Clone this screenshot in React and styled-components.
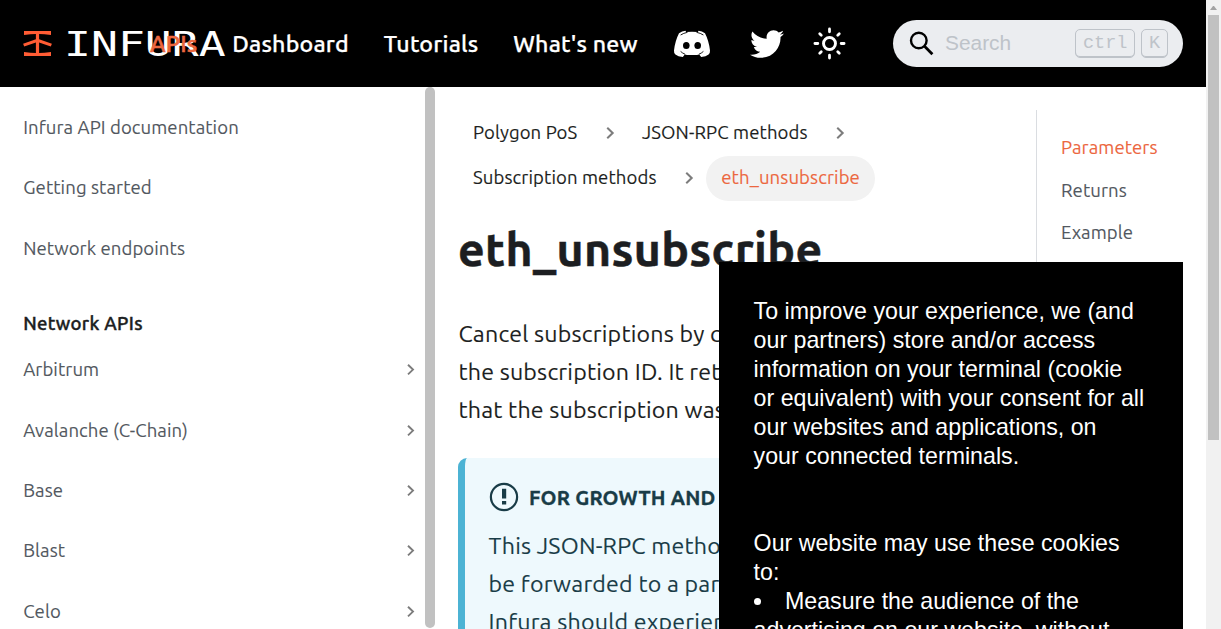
import React from "react";
import styled, { createGlobalStyle } from "styled-components";
import { FaTwitter } from "react-icons/fa";

const ubuntu = `Ubuntu, "Noto Sans", "Open Sans", sans-serif`;
const orange = "#ec673f";

const GlobalStyle = createGlobalStyle`
  *, *::before, *::after { box-sizing: border-box; }
  html, body { margin: 0; height: 100%; overflow: hidden; }
  body { background: #fff; color: #1c1e21; font: 400 23.2px/38px ${ubuntu}; }
`;

const Page = styled.div`
  display: flex;
  width: 100vw;
  height: 100vh;
  overflow: hidden;
`;

const Site = styled.div`
  position: relative;
  display: flex;
  flex-direction: column;
  width: 1206px;
  overflow: hidden;
`;

const Navbar = styled.header`
  flex: none;
  display: flex;
  align-items: center;
  height: 87px;
  padding: 0 23px;
  background: #000;
`;

const Brand = styled.a`
  flex: none;
  display: flex;
  align-items: center;
  width: 127px;
  color: #fff;
  & > svg { flex: none; }
`;

const Wordmark = styled.span`
  flex: none;
  margin-left: 11.5px;
  font: 400 34.4px/40px "DejaVu Sans Mono", monospace;
  white-space: nowrap;
  transform: scaleX(1.302);
  transform-origin: left center;
`;

const NavLink = styled.a`
  flex: none;
  position: relative;
  margin-right: 35px;
  padding-bottom: 2px;
  color: ${(p) => (p.$active ? orange : "#fff")};
  font-weight: 500;
  letter-spacing: 0.16px;
  white-space: nowrap;
  -webkit-text-stroke: ${(p) => (p.$active ? 0.5 : 0.25)}px;
`;

const NavIcon = styled.a`
  flex: none;
  display: flex;
  margin-right: ${(p) => p.$gap}px;
  color: #fff;
`;

const SearchBox = styled.div`
  display: flex;
  align-items: center;
  width: 290px;
  height: 47px;
  margin-left: auto;
  padding: 0 15px 0 16px;
  border-radius: 24px;
  background: #ebedf0;
  color: #bec3c9;
`;

const Placeholder = styled.span`
  flex: 1;
  margin-left: 11px;
  padding-bottom: 1px;
  font: 20.88px/24px "Liberation Sans", Arial, sans-serif;
`;

const Key = styled.kbd`
  height: 29px;
  margin-left: 6px;
  padding: 0 6.8px;
  border: 1px solid #bec3c9;
  border-radius: 5px;
  box-shadow: inset 0 -1px 0 #bec3c9;
  font: 18.56px/27px "Liberation Mono", monospace;
`;

const Body = styled.div`
  flex: 1;
  display: flex;
  min-height: 0;
`;

const Sidebar = styled.aside`
  flex: none;
  display: flex;
  width: 435px;
`;

const Menu = styled.nav`
  flex: 1;
  padding: 10.9px 8px 0 23.2px;
`;

const MenuItem = styled.a`
  display: flex;
  align-items: center;
  justify-content: space-between;
  height: 60.36px;
  color: #525860;
  font-size: 18.56px;
  letter-spacing: 0.08px;
  -webkit-text-stroke: 0.1px;
`;

const MenuHeading = styled.div`
  margin-top: 27px;
  height: 34px;
  color: #1c1e21;
  font-size: 18.56px;
  font-weight: 500;
  letter-spacing: 0.33px;
  line-height: 35px;
  -webkit-text-stroke: 0.4px;
`;

const SidebarScroll = styled.div`
  width: 10px;
  margin-bottom: 1px;
  border-radius: 5px;
  background: #c1c1c1;
`;

const Article = styled.main`
  flex: none;
  width: 578px;
  padding: 24px 0 0 23px;
  -webkit-text-stroke: 0.12px;
`;

const Crumbs = styled.nav`
  display: flex;
  flex-wrap: wrap;
  width: 560px;
`;

const Crumb = styled.span`
  display: flex;
  align-items: center;
  height: 45px;
  padding: 0 15px 2px;
  border-radius: 23px;
  background: ${(p) => (p.$active ? "#f2f2f2" : "none")};
  color: ${(p) => (p.$active ? orange : "#1c1e21")};
  font-size: 18.56px;
  letter-spacing: 0.1px;
`;

const CrumbArrow = styled.span`
  display: flex;
  align-items: center;
  margin: 0 10.2px 0 11.5px;
  padding-bottom: 1px;
`;

const Title = styled.h1`
  margin: 19px 0 0;
  font-size: 46.4px;
  font-weight: 700;
  letter-spacing: 0.36px;
  line-height: 58px;
  -webkit-text-stroke: 0.5px;
`;

const Lines = styled.p`
  margin: ${(p) => p.$margin};
  letter-spacing: 0.2px;
  white-space: pre;
`;

const Admonition = styled.section`
  height: 220px;
  margin-top: 30px;
  padding: 21px 23px;
  border-left: 7px solid #4cb3d4;
  border-radius: 9px;
  background: #eef9fd;
  color: #193c47;
`;

const AdmonitionTitle = styled.div`
  display: flex;
  align-items: center;
  gap: 10px;
  height: 38px;
  padding-left: 1px;
  font-size: 20.3px;
  font-weight: 700;
  letter-spacing: 0.2px;
  white-space: nowrap;
  -webkit-text-stroke: 0.3px;
  & > svg { margin-top: -2px; }
`;

const Toc = styled.nav`
  flex: none;
  align-self: flex-start;
  width: 170px;
  height: 480px;
  margin: 23px 0 0 23px;
  padding: 17px 24px;
  border-left: 1px solid #dadde1;
`;

const TocLink = styled.a`
  display: block;
  height: 42.6px;
  color: ${(p) => (p.$active ? orange : "#525860")};
  font-size: 18.56px;
  letter-spacing: 0.08px;
  line-height: 42.6px;
  -webkit-text-stroke: 0.1px;
`;

const Consent = styled.div`
  position: absolute;
  left: 719px;
  top: 262px;
  width: 464px;
  height: 367px;
  padding: 35px 34.6px 0;
  overflow: hidden;
  background: #000;
  color: #fff;
  font: 23.2px/29px "Liberation Sans", Arial, sans-serif;
`;

const ConsentText = styled.p`
  margin: 0 0 ${(p) => p.$after ?? 0}px;
  white-space: pre;
`;

const Bullet = styled.span`
  display: inline-block;
  width: 7px;
  height: 7px;
  margin-right: 24.4px;
  border-radius: 50%;
  background: #fff;
  vertical-align: 4px;
`;

const Scrollbar = styled.div`
  flex: none;
  width: 15px;
  padding: 0 2px;
  background: #f1f1f1;
`;

const ScrollUp = styled.div`
  height: 15px;
  padding: 6px 2px 0;
  &::before {
    content: "";
    display: block;
    border: 3.5px solid transparent;
    border-top: 0;
    border-bottom: 4px solid #a3a3a3;
  }
`;

const ScrollThumb = styled.div`
  width: 11px;
  height: 425px;
  background: #c1c1c1;
`;

const LogoMark = () => (
  <svg width="29" height="25" viewBox="0 0 29 25" fill="#ff5c34">
    <path d="M1 0H28V4Q21 2.9 16.1 2.9V8.2L28.9 12.8L27.8 15.6L16.1 11.4V22.1Q21 22.1 28 21V25H1V21Q8 22.1 12.9 22.1V11.4L1.2 15.6L.1 12.8L12.9 8.2V2.9Q8 2.9 1 4Z" />
  </svg>
);

const DiscordIcon = () => (
  <svg width="38" height="28" viewBox="0 0 38 28">
    <path
      fill="#fff"
      d="M12.5 .8Q9 1 6 3.2Q2 11 1 20.5Q.8 23.3 2.4 24.6Q5 26.8 9.8 26.9L11.8 24.5Q13 25 19 25Q25 25 26.2 24.5L28.2 26.9Q33 26.8 35.6 24.6Q37.2 23.3 37 20.5Q36 11 32 3.2Q29 1 25.5 .8L24.9 2Q19 1.3 13.1 2Z"
    />
    <path d="M7.6 5Q10.5 3.1 14.5 2.3M30.4 5Q27.5 3.1 23.5 2.3M7.6 21.4Q9.5 23.2 12.2 24.3M30.4 21.4Q28.5 23.2 25.8 24.3" fill="none" stroke="#000" strokeWidth=".9" />
    <ellipse cx="13.3" cy="15.5" rx="3.3" ry="3.6" />
    <ellipse cx="24.7" cy="15.5" rx="3.3" ry="3.6" />
  </svg>
);

const SunIcon = () => (
  <svg width="35" height="35" viewBox="0 0 24 24" fill="none" stroke="#fff" strokeLinecap="round" strokeWidth="1.9">
    <circle cx="12" cy="12" r="4.1" strokeWidth="2" />
    <path d="M12 2V4M12 20V22M2 12H4M20 12H22M5.3 5.3L6.35 6.35M17.65 17.65L18.7 18.7M5.3 18.7L6.35 17.65M17.65 6.35L18.7 5.3" />
  </svg>
);

const SearchIcon = () => (
  <svg width="25" height="25" viewBox="0 0 25 25" fill="none" stroke="#000">
    <circle cx="9.8" cy="9.5" r="7.8" strokeWidth="2.4" />
    <path d="M15.3 15L23.4 23.2" strokeWidth="2.8" />
  </svg>
);

const Chevron = ({ size }) => (
  <svg width={size} height={size} viewBox="0 0 12 12" fill="none" stroke="#7c7c7c" strokeWidth="1.9">
    <path d="M3 .8L8 5.6L3 10.4" />
  </svg>
);

const InfoIcon = () => (
  <svg width="30" height="30" viewBox="0 0 30 30" fill="#193c47">
    <circle cx="15" cy="15" r="13.1" fill="none" stroke="#193c47" strokeWidth="2.2" />
    <path d="M13 6.8H17.2V16.5H13ZM13 19H17.2V22.6H13Z" />
  </svg>
);

const topPages = ["Infura API documentation", "Getting started", "Network endpoints"];
const networks = ["Arbitrum", "Avalanche (C-Chain)", "Base", "Blast", "Celo"];
const crumbs = ["Polygon PoS", "JSON-RPC methods", "Subscription methods"];

export default function App() {
  return (
    <Page>
      <GlobalStyle />
      <Site>
        <Navbar>
          <Brand>
            <LogoMark />
            <Wordmark>INFURA</Wordmark>
          </Brand>
          <NavLink $active>APIs</NavLink>
          <NavLink>Dashboard</NavLink>
          <NavLink>Tutorials</NavLink>
          <NavLink>What's new</NavLink>
          <NavIcon $gap={39}><DiscordIcon /></NavIcon>
          <NavIcon $gap={28}><FaTwitter size={34} /></NavIcon>
          <NavIcon $gap={0}><SunIcon /></NavIcon>
          <SearchBox>
            <SearchIcon />
            <Placeholder>Search</Placeholder>
            <Key>ctrl</Key>
            <Key>K</Key>
          </SearchBox>
        </Navbar>
        <Body>
          <Sidebar>
            <Menu>
              {topPages.map((name) => <MenuItem key={name}>{name}</MenuItem>)}
              <MenuHeading>Network APIs</MenuHeading>
              {networks.map((name) => (
                <MenuItem key={name}>{name}<Chevron size={12} /></MenuItem>
              ))}
            </Menu>
            <SidebarScroll />
          </Sidebar>
          <Article>
            <Crumbs>
              {crumbs.map((name) => (
                <React.Fragment key={name}>
                  <Crumb>{name}</Crumb>
                  <CrumbArrow><Chevron size={13} /></CrumbArrow>
                </React.Fragment>
              ))}
              <Crumb $active>eth_unsubscribe</Crumb>
            </Crumbs>
            <Title>eth_unsubscribe</Title>
            <Lines $margin="36px 0 0 0.4px">
              {"Cancel subscriptions by calling\nthe subscription ID. It returns\nthat the subscription was"}
            </Lines>
            <Admonition>
              <AdmonitionTitle><InfoIcon />FOR GROWTH AND CUSTOM</AdmonitionTitle>
              <Lines $margin="9px 0 0 0.6px">
                {"This JSON-RPC method\nbe forwarded to a partner\nInfura should experience"}
              </Lines>
            </Admonition>
          </Article>
          <Toc>
            <TocLink $active>Parameters</TocLink>
            <TocLink>Returns</TocLink>
            <TocLink>Example</TocLink>
          </Toc>
        </Body>
        <Consent>
          <ConsentText $after={58}>
            {"To improve your experience, we (and\nour partners) store and/or access\ninformation on your terminal (cookie\nor equivalent) with your consent for all\nour websites and applications, on\nyour connected terminals."}
          </ConsentText>
          <ConsentText>{"Our website may use these cookies\nto:"}</ConsentText>
          <ConsentText><Bullet />{"Measure the audience of the\nadvertising on our website, without"}</ConsentText>
        </Consent>
      </Site>
      <Scrollbar>
        <ScrollUp />
        <ScrollThumb />
      </Scrollbar>
    </Page>
  );
}
